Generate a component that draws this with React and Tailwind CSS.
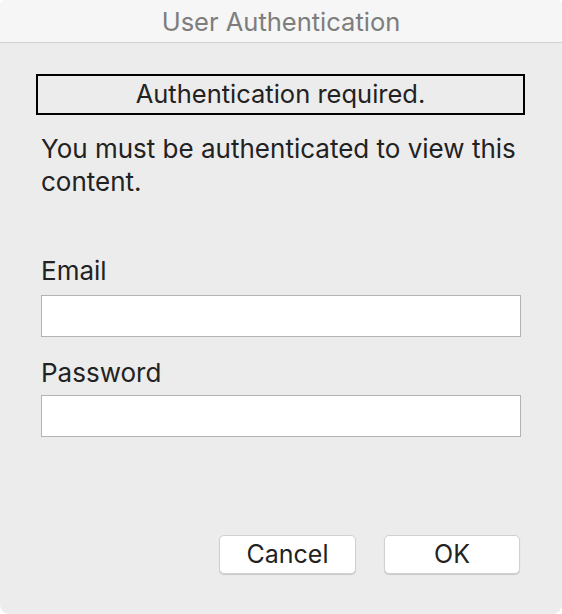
import React from 'react';

const font = { fontFamily: 'Inter, "Noto Sans", sans-serif' };

export default function App() {
  return (
    <div className="w-[562px] h-[614px] bg-white" style={font}>
      <div className="w-full h-full rounded-t-[6px] rounded-b-[9px] overflow-hidden bg-[#ececec] flex flex-col">
        <div className="h-[43px] shrink-0 bg-[#f6f6f6] border-b border-[#d1d1d1] flex items-center justify-center">
          <span className="text-[25.5px] leading-none text-[#7d7d7d] mt-[1px]">User Authentication</span>
        </div>
        <div className="flex-1 flex flex-col px-[41px] pt-[31px] pb-[40px]">
          <div className="-ml-[5px] -mr-[4px] h-[41px] border-2 border-black flex items-center justify-center text-[25.5px] text-[#222]">
            Authentication required.
          </div>
          <p className="mt-[17px] text-[26px] leading-[33px] text-[#222]">
            You must be authenticated to view this content.
          </p>
          <label className="mt-[58px] text-[26px] leading-[30px] text-[#222]">Email</label>
          <input className="mt-[9px] h-[42px] bg-white border border-[#b3b3b3] outline-none" />
          <label className="mt-[21px] text-[26px] leading-[30px] text-[#222]">Password</label>
          <input type="password" className="mt-[7px] h-[42px] bg-white border border-[#b3b3b3] outline-none" />
          <div className="mt-auto mr-[1px] flex justify-end gap-[28px]">
            <button className="w-[137px] h-[39px] bg-white rounded-[5px] border border-[#d0d0d0] shadow-[0_1px_1px_rgba(0,0,0,0.15)] text-[25px] text-[#222]">
              Cancel
            </button>
            <button className="w-[136px] h-[39px] bg-white rounded-[5px] border border-[#d0d0d0] shadow-[0_1px_1px_rgba(0,0,0,0.15)] text-[25px] text-[#222]">
              OK
            </button>
          </div>
        </div>
      </div>
    </div>
  );
}
